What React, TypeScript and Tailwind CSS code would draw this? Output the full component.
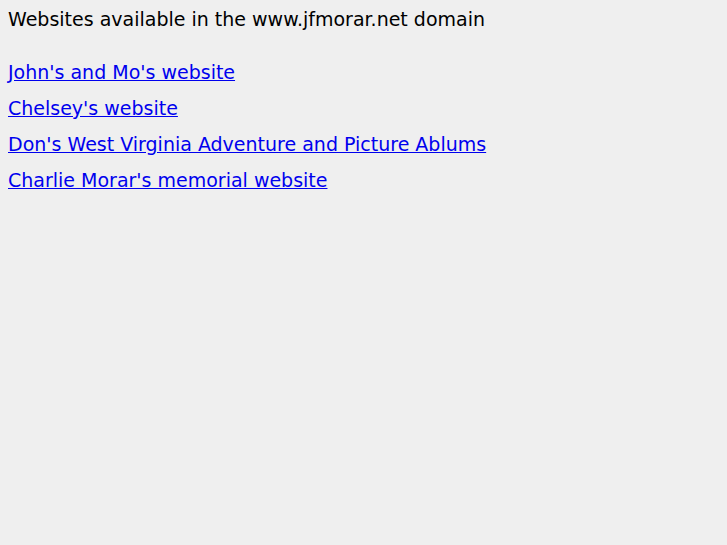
export default function App() {
  const links = [
    "John's and Mo's website",
    "Chelsey's website",
    "Don's West Virginia Adventure and Picture Ablums",
    "Charlie Morar's memorial website",
  ];
  return (
    <div className="min-h-screen w-full bg-[#efefef] px-2 pt-2 font-['DejaVu_Sans',sans-serif] text-[19px] text-black">
      <div className="leading-[22px]">Websites available in the www.jfmorar.net domain</div>
      <div className="mt-[24px] flex flex-col items-start">
        {links.map((l) => (
          <a key={l} href="#" className="leading-[36px] text-[#0000ee] underline">
            {l}
          </a>
        ))}
      </div>
    </div>
  );
}
